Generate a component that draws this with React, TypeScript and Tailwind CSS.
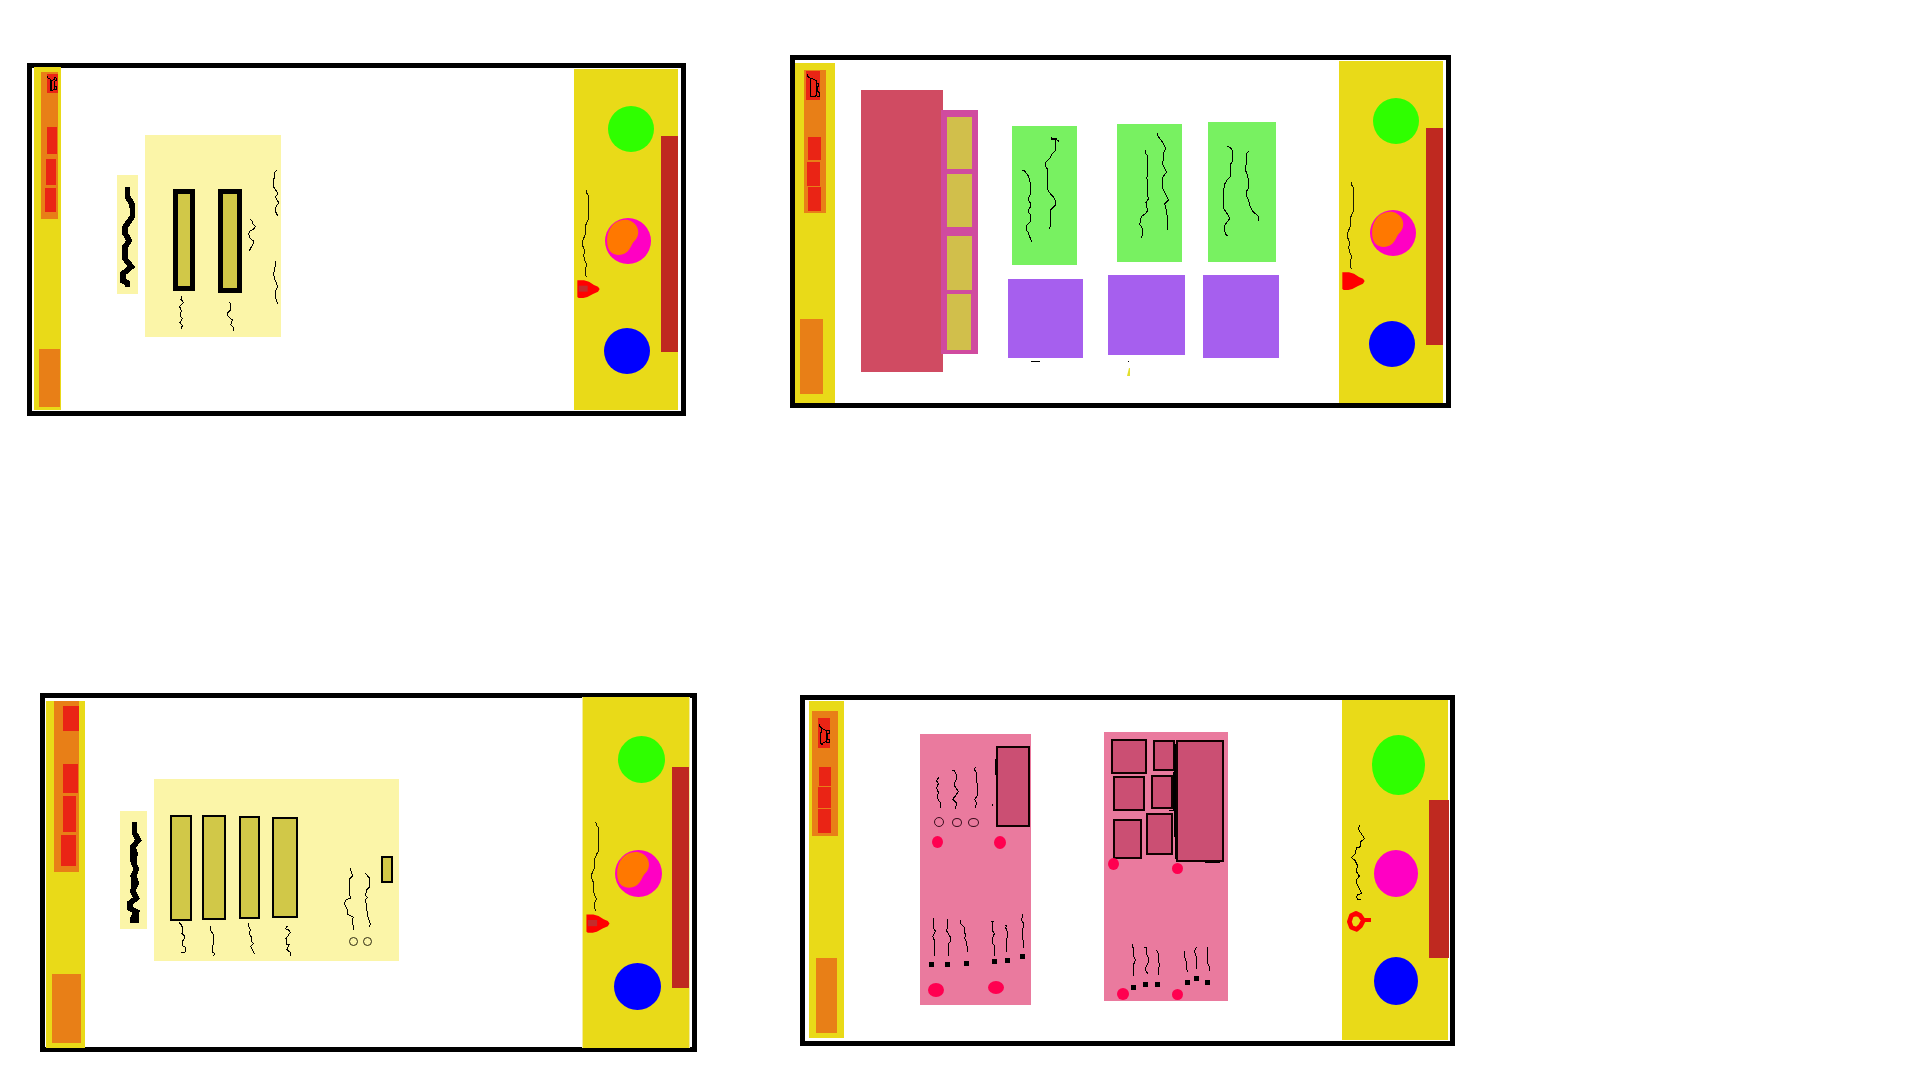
import type { ReactNode } from "react";

function Ink({ box, paths, weight = 3, className }: { box: string; paths: string[]; weight?: number; className: string }) {
  return (
    <svg viewBox={box} preserveAspectRatio="none" className={className} fill="none" stroke="#000" strokeWidth={weight} shapeRendering="crispEdges" aria-hidden="true">
      {paths.map((d) => (
        <path key={d} d={d} />
      ))}
    </svg>
  );
}

const OVERLAY = "pointer-events-none absolute inset-0 size-full";

function Frame({ className, children }: { className: string; children: ReactNode }) {
  return <article className={`flex items-start border-[5px] border-black bg-white ${className}`}>{children}</article>;
}

type NavProps = {
  className: string;
  group: string;
  cart: string;
  cartBox?: string;
  cartPaths?: string[];
  links: string[];
  footer: string;
};

function Nav({ className, group, cart, cartBox, cartPaths, links, footer }: NavProps) {
  return (
    <nav className={`flex shrink-0 flex-col items-start bg-[#e9da18] ${className}`}>
      <div className={`flex flex-col items-start bg-[#e87f17] ${group}`}>
        <button aria-label="Cart" className={`shrink-0 bg-[#ea2415] ${cart}`}>
          {cartBox && cartPaths && <Ink box={cartBox} paths={cartPaths} className="block size-full" />}
        </button>
        {links.map((c, i) => (
          <button key={i} aria-label={`Menu item ${i + 1}`} className={`shrink-0 bg-[#ea2415] ${c}`} />
        ))}
      </div>
      <button aria-label="Account" className={`bg-[#e87f17] ${footer}`} />
    </nav>
  );
}

function Dial() {
  return (
    <svg viewBox="0 0 138 138" className="block size-full" aria-hidden="true">
      <circle cx="69" cy="69" r="69" fill="#ff00c3" />
      <path d="M18 28 C30 8 62 -1 81 11 C101 22 106 48 91 66 C82 73 81 82 73 94 C60 114 30 117 14 98 C3 82 3 48 18 28Z" fill="#ff7800" />
    </svg>
  );
}

const PIN_LINE = "M37 364 L39 374 L44 380 V450 L38 462 L33 473 V498 L26 515 V530 L32 545 L29 560 L33 575 L39 588 L33 602 V615 L38 625";

function Side({ className, ink, circles, bar, core }: { className: string; ink: string; circles: string[]; bar: string; core: boolean }) {
  return (
    <aside className={`ml-auto flex shrink-0 items-start bg-[#e9da18] ${className}`}>
      <svg viewBox="0 0 90 1023" preserveAspectRatio="none" className={`shrink-0 ${ink}`} aria-hidden="true">
        <path d={PIN_LINE} fill="none" stroke="#1a1a00" strokeWidth="3" shapeRendering="crispEdges" />
        <path d="M10 634 H30 L45 638 L60 648 L72 653 L77 660 L72 668 L57 675 L40 684 L28 687 H14 L10 684Z" fill="#ff0000" />
        {core && <path d="M14 650 H41 V668 H14Z" fill="#c42b2b" />}
      </svg>
      <div className="flex flex-col items-start">
        <div className={`rounded-full bg-[#2fff00] ${circles[0]}`} />
        <div className={circles[1]}>
          <Dial />
        </div>
        <div className={`rounded-full bg-[#0000ff] ${circles[2]}`} />
      </div>
      <div className={`ml-auto bg-[#bf2920] ${bar}`} />
    </aside>
  );
}

const FIELD = "shrink-0 border-black bg-[#d1c848]";
const RADIO = "shrink-0 appearance-none rounded-[50%] border";
const SQUARE = "size-[5px] shrink-0 appearance-none bg-black";
const DOT = "shrink-0 rounded-[50%] bg-[#ff0050]";
const THUMB = "shrink-0 border-2 border-[#100000] bg-[#cb4f73]";

function LoginFrame() {
  return (
    <Frame className="col-start-2 mt-2">
      <Nav
        className="-mt-px mb-px ml-[2px] h-[343px] w-[27px]"
        group="mt-[5px] ml-[7px] h-[147px] w-[17px]"
        cart="mt-[2px] ml-[6px] h-[19px] w-[11px]"
        cartBox="51 57 33 57"
        cartPaths={["M51 62 L54 69 L64 75 V107 L60 108 V75", "M66 76 L74 72 V68 L80 70 V77 L72 79 V104 L60 108", "M72 96 L78 93 L81 99 L78 105 L72 104"]}
        links={["mt-[34px] ml-[6px] h-[27px] w-[10px]", "mt-[5px] ml-[5px] h-[26px] w-[10px]", "mt-[3px] ml-[4px] h-[24px] w-[11px]"]}
        footer="mt-[130px] ml-[5px] h-[58px] w-[21px]"
      />
      <Ink
        box="291 375 63 357"
        weight={17}
        paths={["M322 411 V440 L335 460 L338 480 L337 500 L314 533 V548 L328 572 L314 592 V625 L334 650 L308 672 V692 L322 698 V711"]}
        className="mt-[107px] ml-[56px] h-[119px] w-[21px] shrink-0 bg-[#fbf5a8]"
      />
      <form className="relative mt-[67px] ml-[7px] flex h-[202px] w-[136px] shrink-0 items-start bg-[#fbf5a8]">
        <input aria-label="User name" className={`mt-[54px] ml-[28px] h-[102px] w-[22px] border-[5px] ${FIELD}`} />
        <input aria-label="Password" className={`mt-[54px] ml-[23px] h-[104px] w-[24px] border-[5px] ${FIELD}`} />
        <Ink
          box="375 255 408 606"
          className={OVERLAY}
          paths={[
            "M484 738 L483 748 L490 757 L479 770 L484 783 L480 798 L487 806 L480 818 L487 826 L484 837",
            "M628 757 L633 764 L631 780 L623 788 V797 L637 810 L632 824 L640 832 L641 842",
            "M691 508 L697 514 L699 521 L706 530 L700 538 L690 542 L686 552 L691 566 L700 573 L699 582 L688 602",
            "M770 361 L765 367 L764 382 L759 390 V408 L770 424 L773 432 L766 440 L776 458 L766 474 L767 486 L773 497",
            "M765 633 V650 L761 670 L763 684 L773 709 L766 724 V742 L773 761",
          ]}
        />
      </form>
      <Side
        core
        className="mt-px mr-[3px] h-[341px] w-[104px]"
        ink="h-[341px] w-[30px]"
        circles={["mt-[37px] ml-[4px] size-[46px]", "mt-[66px] ml-px size-[46px]", "mt-[64px] size-[46px]"]}
        bar="mt-[67px] h-[216px] w-[17px]"
      />
    </Frame>
  );
}

function Product({ className, card, picture, box, paths, children }: { className: string; card: string; picture: string; box: string; paths: string[]; children?: ReactNode }) {
  return (
    <section className={`flex shrink-0 flex-col items-start ${className}`}>
      <Ink box={box} paths={paths} className={`bg-[#78f161] ${card}`} />
      <div className={`bg-[#a65fee] ${picture}`} />
      {children}
    </section>
  );
}

function HomeFrame() {
  return (
    <Frame className="col-start-4">
      <Nav
        className="mt-[3px] h-[340px] w-[40px]"
        group="mt-[7px] ml-[9px] h-[143px] w-[22px]"
        cart="mt-px ml-[2px] h-[29px] w-[14px]"
        cartBox="78 93 42 87"
        cartPaths={["M81 101 V105 L86 112 L92 115 V169 H105 L109 166 V122 L98 117 L86 112", "M110 130 H116 V138 H111 V152", "M109 158 L113 154 L119 160 V169 H110"]}
        links={["mt-[37px] ml-[4px] h-[23px] w-[13px]", "mt-[2px] ml-[3px] h-[24px] w-[13px]", "mt-px ml-[4px] h-[24px] w-[13px]"]}
        footer="mt-[106px] ml-[5px] h-[75px] w-[23px]"
      />
      <div className="mt-[30px] ml-[26px] h-[282px] w-[82px] shrink-0 bg-[#d04b62]" />
      <div className="mt-[50px] -ml-[2px] flex h-[244px] w-[37px] shrink-0 flex-col items-start bg-[#d04b9f] pt-[7px] pl-[6px]">
        <button aria-label="Tab 1" className="h-[52px] w-[25px] bg-[#d1bf4b]" />
        <button aria-label="Tab 2" className="mt-[5px] h-[53px] w-[25px] bg-[#d1bf4b]" />
        <button aria-label="Tab 3" className="mt-[9px] h-[54px] w-[25px] bg-[#d1bf4b]" />
        <button aria-label="Tab 4" className="mt-[4px] h-[56px] w-[24px] bg-[#d1bf4b]" />
      </div>
      <Product
        className="mt-[66px] ml-[30px]"
        card="ml-[4px] h-[139px] w-[65px]"
        picture="mt-[14px] h-[79px] w-[75px]"
        box="66 78 195 417"
        paths={[
          "M96 211 H102 L113 224 L119 238 L122 260 V283 L116 292 V302 L122 310 V320 L116 328 V338 L122 344 V364 L108 378 V388 L114 396 L119 410 L125 425",
          "M184 112 V119 H200 L207 124 M184 116 H200 M197 120 V152 L186 162 L180 174 L167 188 V200 L173 208 V268 L180 280 L191 292 L197 303 V314 L182 330 V374 L179 386",
        ]}
      >
        <div className="mt-[3px] ml-[23px] h-px w-[9px] bg-black" />
      </Product>
      <Product
        className="mt-[64px] ml-[25px]"
        card="ml-[9px] h-[138px] w-[65px]"
        picture="mt-[13px] h-[80px] w-[77px]"
        box="381 72 195 414"
        paths={[
          "M466 151 V160 L473 168 V228 L468 234 L473 240 V288 L476 296 L468 308 V320 L473 328 L470 338 L454 350 L451 362 L449 374 L455 380 L458 390 V405 L454 413",
          "M502 99 V106 L516 124 L527 144 L521 160 L518 194 L524 206 L530 216 L518 232 V264 L527 284 L536 300 L524 312 L528 326 L532 350 V389",
        ]}
      >
        <svg viewBox="0 0 3 16" className="mt-[6px] ml-[19px] h-[16px] w-[3px]" aria-hidden="true">
          <rect x="1" width="1" height="1" />
          <path d="M2 7 H3 V15 H0Z" fill="#e2df2e" />
        </svg>
      </Product>
      <Product
        className="mt-[62px] ml-[18px]"
        card="ml-[5px] h-[140px] w-[68px]"
        picture="mt-[13px] h-[83px] w-[76px]"
        box="654 66 204 420"
        paths={[
          "M712 139 L720 142 L728 152 V184 L722 192 V230 L712 238 L704 252 L701 270 V326 L712 342 L719 356 L710 368 L703 378 V390 L708 404 L713 408",
          "M776 153 L770 160 V190 L766 200 V210 L772 224 L776 246 V264 L769 274 V288 L776 302 L779 316 L788 334 L802 346 L806 352 V362",
        ]}
      />
      <Side
        core={false}
        className="mt-px mr-[3px] h-[342px] w-[104px]"
        ink="h-[341px] w-[30px]"
        circles={["mt-[37px] ml-[4px] size-[46px]", "mt-[66px] ml-px size-[46px]", "mt-[65px] size-[46px]"]}
        bar="mt-[67px] h-[217px] w-[17px]"
      />
    </Frame>
  );
}

function SignUpFrame() {
  return (
    <Frame className="col-start-2">
      <Nav
        className="mt-[3px] -mb-px ml-px h-[347px] w-[39px]"
        group="ml-[8px] h-[171px] w-[25px]"
        cart="mt-[5px] ml-[9px] h-[25px] w-[16px]"
        links={["mt-[33px] ml-[9px] h-[29px] w-[15px]", "mt-[3px] ml-[9px] h-[36px] w-[13px]", "mt-[3px] ml-[7px] h-[31px] w-[15px]"]}
        footer="mt-[102px] ml-[6px] h-[69px] w-[29px]"
      />
      <Ink
        box="270 393 81 354"
        weight={17}
        paths={["M313 426 L314 460 L325 480 L308 502 L315 520 L311 548 L319 568 L310 588 L319 608 L308 632 L319 655 L299 670 V685 L319 695 L310 712 L313 728", "M308 505 V545 M310 595 V635 M308 712 V728 M318 690 V728"]}
        className="mt-[113px] ml-[35px] h-[118px] w-[27px] shrink-0 bg-[#fbf5a8]"
      />
      <form className="relative mt-[81px] ml-[7px] flex h-[182px] w-[245px] shrink-0 items-start bg-[#fbf5a8]">
        <input aria-label="First name" className={`mt-[36px] ml-[16px] h-[106px] w-[22px] border-2 ${FIELD}`} />
        <input aria-label="Last name" className={`mt-[36px] ml-[10px] h-[105px] w-[24px] border-2 ${FIELD}`} />
        <input aria-label="Email" className={`mt-[37px] ml-[13px] h-[103px] w-[21px] border-2 ${FIELD}`} />
        <input aria-label="Password" className={`mt-[38px] ml-[12px] h-[101px] w-[26px] border-2 ${FIELD}`} />
        <input type="radio" name="plan" aria-label="Option 1" className={`mt-[158px] ml-[51px] size-[9px] border-[#2e2a10] ${RADIO}`} />
        <input type="radio" name="plan" aria-label="Option 2" className={`mt-[158px] ml-[5px] size-[9px] border-[#2e2a10] ${RADIO}`} />
        <button aria-label="Submit" className={`mt-[77px] ml-[9px] h-[27px] w-[12px] border-2 ${FIELD}`} />
        <Ink
          box="372 297 735 546"
          className={OVERLAY}
          paths={[
            "M447 727 L453 733 L458 744 L456 760 L463 768 L462 778 L456 786 V796 L466 802 V816 L453 818",
            "M544 738 H541 V750 L549 762 V796 L547 816 L553 820 L551 828",
            "M656 729 V740 L661 748 L658 762 L666 774 L664 784 L670 790 L662 800 L668 812 L674 822",
            "M772 738 L766 746 L776 750 L781 757 L768 776 V792 H779 L770 808 L782 818 V827",
            "M961 565 L964 576 L968 588 L959 596 V644 L962 654 L948 660 L943 672 L951 686 L953 703 L970 711 L966 724 L970 740 V749",
            "M1006 580 L1018 594 V622 L1010 630 L1006 646 L1012 652 L1006 660 L1010 680 L1012 706 L1021 732 L1018 742",
          ]}
        />
      </form>
      <Side
        core
        className="-mt-px mr-[2px] -mb-px h-[351px] w-[108px] border-x border-[#f3eca0]"
        ink="h-[351px] w-[31px]"
        circles={["mt-[39px] ml-[4px] size-[47px]", "mt-[67px] ml-px size-[47px]", "mt-[66px] size-[47px]"]}
        bar="mt-[70px] h-[221px] w-[17px]"
      />
    </Frame>
  );
}

function CheckoutFrame() {
  return (
    <Frame className="col-start-4 mt-[2px]">
      <Nav
        className="mt-px mb-[3px] ml-[4px] h-[337px] w-[35px]"
        group="mt-[10px] ml-[3px] h-[125px] w-[26px]"
        cart="mt-[7px] ml-[6px] h-[30px] w-[12px]"
        cartBox="84 99 36 90"
        cartPaths={["M88 118 V123 L95 129 L92 150 V175 L96 179 L100 173 L109 169 V137 L97 131 L88 123", "M109 137 H117 V146 H111 V163", "M109 163 H117 V171 H109"]}
        links={["mt-[19px] ml-[7px] h-[19px] w-[12px]", "mt-px ml-[6px] h-[21px] w-[13px]", "mt-px ml-[6px] h-[24px] w-[13px]"]}
        footer="mt-[122px] ml-[7px] h-[75px] w-[21px]"
      />
      <section className="relative mt-[34px] ml-[76px] h-[271px] w-[111px] shrink-0 bg-[#ea7a9e]">
        <div className="flex items-end pt-[12px]">
          <input type="radio" name="size" aria-label="Size 1" className={`ml-[14px] size-[10px] border-[#3a0d1d] ${RADIO}`} />
          <input type="radio" name="size" aria-label="Size 2" className={`ml-[8px] h-[9px] w-[10px] border-[#3a0d1d] ${RADIO}`} />
          <input type="radio" name="size" aria-label="Size 3" className={`ml-[6px] h-[9px] w-[11px] border-[#3a0d1d] ${RADIO}`} />
          <div className={`ml-[17px] h-[81px] w-[34px] ${THUMB}`} />
        </div>
        <div className="mt-[9px] flex items-start">
          <div className={`ml-[12px] h-[12px] w-[11px] ${DOT}`} />
          <div className={`ml-[51px] h-[13px] w-[12px] ${DOT}`} />
        </div>
        <div className="mt-[105px] flex h-[13px] items-start">
          <input type="checkbox" aria-label="Item 1" className={`mt-[8px] ml-[9px] ${SQUARE}`} />
          <input type="checkbox" aria-label="Item 2" className={`mt-[8px] ml-[11px] ${SQUARE}`} />
          <input type="checkbox" aria-label="Item 3" className={`mt-[7px] ml-[14px] ${SQUARE}`} />
          <input type="checkbox" aria-label="Item 4" className={`mt-[5px] ml-[23px] ${SQUARE}`} />
          <input type="checkbox" aria-label="Item 5" className={`mt-[4px] ml-[8px] ${SQUARE}`} />
          <input type="checkbox" aria-label="Item 6" className={`ml-[10px] ${SQUARE}`} />
        </div>
        <div className="mt-[14px] flex items-start">
          <div className={`mt-[2px] ml-[8px] h-[14px] w-[16px] ${DOT}`} />
          <div className={`ml-[44px] h-[13px] w-[16px] ${DOT}`} />
        </div>
        <Ink
          box="390 147 333 813"
          className={OVERLAY}
          paths={[
            "M446 277 L440 288 L445 296 L440 308 L445 322 L442 340 L451 353 V369",
            "M487 256 H493 L499 270 V282 L493 294 V302 L505 319 L497 332 L488 343 L500 354 L496 371",
            "M556 247 L553 254 L559 262 V290 L563 300 V330 L554 344 L560 354 L556 368",
            "M430 700 V730 L436 738 L428 754 L433 766 V812",
            "M472 702 V728 L470 738 L482 758 V768 L475 776 V812",
            "M511 706 L513 718 L522 726 V742 L528 748 L524 760 L530 772 L533 800",
            "M611 709 H606 L607 736 L613 746 L607 762 L608 776 L613 782 V812",
            "M646 721 H650 L647 728 L653 742 L650 770 L649 802",
            "M698 688 V696 L694 704 L699 712 V730 L697 752 L700 770 V788",
            "M607 358 V362 M617 222 V270",
          ]}
        />
      </section>
      <section className="relative mt-[32px] ml-[73px] h-[269px] w-[124px] shrink-0 bg-[#ea7a9e]">
        <div className="flex h-[130px] items-start">
          <div className="ml-[7px] flex w-[35px] flex-col items-start">
            <div className={`mt-[7px] h-[35px] w-[36px] ${THUMB}`} />
            <div className={`mt-[2px] ml-[2px] h-[35px] w-[32px] ${THUMB}`} />
            <div className={`mt-[8px] ml-[2px] h-[40px] w-[29px] ${THUMB}`} />
          </div>
          <div className="flex w-[29px] flex-col items-start">
            <div className={`mt-[8px] ml-[7px] h-[31px] w-[22px] ${THUMB}`} />
            <div className={`mt-[4px] ml-[5px] h-[34px] w-[22px] ${THUMB}`} />
            <div className={`mt-[4px] h-[42px] w-[27px] ${THUMB}`} />
          </div>
          <div className={`mt-[8px] ml-px h-[122px] w-[48px] ${THUMB}`} />
        </div>
        <div className="-mt-[4px] flex items-start">
          <div className={`ml-[4px] h-[12px] w-[11px] ${DOT}`} />
          <div className={`mt-[5px] ml-[53px] size-[11px] ${DOT}`} />
        </div>
        <div className="mt-[102px] flex h-[14px] items-start">
          <input type="checkbox" aria-label="Item 7" className={`mt-[9px] ml-[27px] ${SQUARE}`} />
          <input type="checkbox" aria-label="Item 8" className={`mt-[6px] ml-[7px] ${SQUARE}`} />
          <input type="checkbox" aria-label="Item 9" className={`mt-[6px] ml-[7px] ${SQUARE}`} />
          <input type="checkbox" aria-label="Item 10" className={`mt-[4px] ml-[25px] ${SQUARE}`} />
          <input type="checkbox" aria-label="Item 11" className={`ml-[4px] ${SQUARE}`} />
          <input type="checkbox" aria-label="Item 12" className={`mt-[4px] ml-[6px] ${SQUARE}`} />
        </div>
        <div className="-mt-[2px] flex items-start">
          <div className={`ml-[13px] size-[12px] ${DOT}`} />
          <div className={`mt-px ml-[43px] size-[11px] ${DOT}`} />
        </div>
        <Ink
          box="72 36 372 807"
          className={OVERLAY}
          paths={[
            "M157 672 V680 L160 684 V706 L166 720 L160 736 V768",
            "M192 682 H198 V700 L205 714 V726 L197 742 V752 L204 762",
            "M229 690 L234 698 V716 L239 736 L234 750 L236 764",
            "M314 693 V712 L318 724 V740 L323 755",
            "M349 682 L343 694 L349 712 V746",
            "M382 682 V728 L388 740 V752",
            "M284 72 V350 M287 72 V416 M281 155 V270 M267 270 H284 M375 427 H420",
          ]}
        />
      </section>
      <aside className="mr-[2px] ml-auto flex h-[340px] w-[106px] shrink-0 items-start bg-[#e9da18]">
        <svg viewBox="66 45 90 1020" className="h-[340px] w-[30px] shrink-0" fill="none" aria-hidden="true">
          <path d="M120 421 L115 430 L121 442 L134 461 L122 470 V485 L109 489 L106 506 L94 518 L105 526 L114 545 L109 552 V560 L118 573 L110 584 V596 L118 610 L125 626 L113 629 L109 636 L113 642 H122" stroke="#000" strokeWidth="3" shapeRendering="crispEdges" />
          <path d="M108 685 L120 691 L130 706 L122 722 L110 733 L94 727 L88 710 L94 692Z" stroke="#ff0000" strokeWidth="14" strokeLinejoin="round" />
          <path d="M128 705 H153" stroke="#ff0000" strokeWidth="12" />
        </svg>
        <div className="flex flex-col items-start">
          <div className="mt-[35px] h-[60px] w-[53px] rounded-[50%] bg-[#2fff00]" />
          <div className="mt-[55px] ml-[2px] h-[47px] w-[44px] rounded-[50%] bg-[#ff00c3]" />
          <div className="mt-[60px] ml-[2px] h-[48px] w-[44px] rounded-[50%] bg-[#0000ff]" />
        </div>
        <div className="mt-[100px] -mr-px ml-auto h-[158px] w-[20px] bg-[#bf2920]" />
      </aside>
    </Frame>
  );
}

export default function App() {
  return (
    <main className="min-h-screen bg-white pt-[55px] font-['Liberation_Sans',sans-serif]">
      <div className="grid grid-cols-[27fr_659fr_104fr_661fr_469fr] items-start">
        <LoginFrame />
        <HomeFrame />
      </div>
      <div className="mt-[277px] grid grid-cols-[40fr_657fr_103fr_655fr_465fr] items-start">
        <SignUpFrame />
        <CheckoutFrame />
      </div>
    </main>
  );
}
